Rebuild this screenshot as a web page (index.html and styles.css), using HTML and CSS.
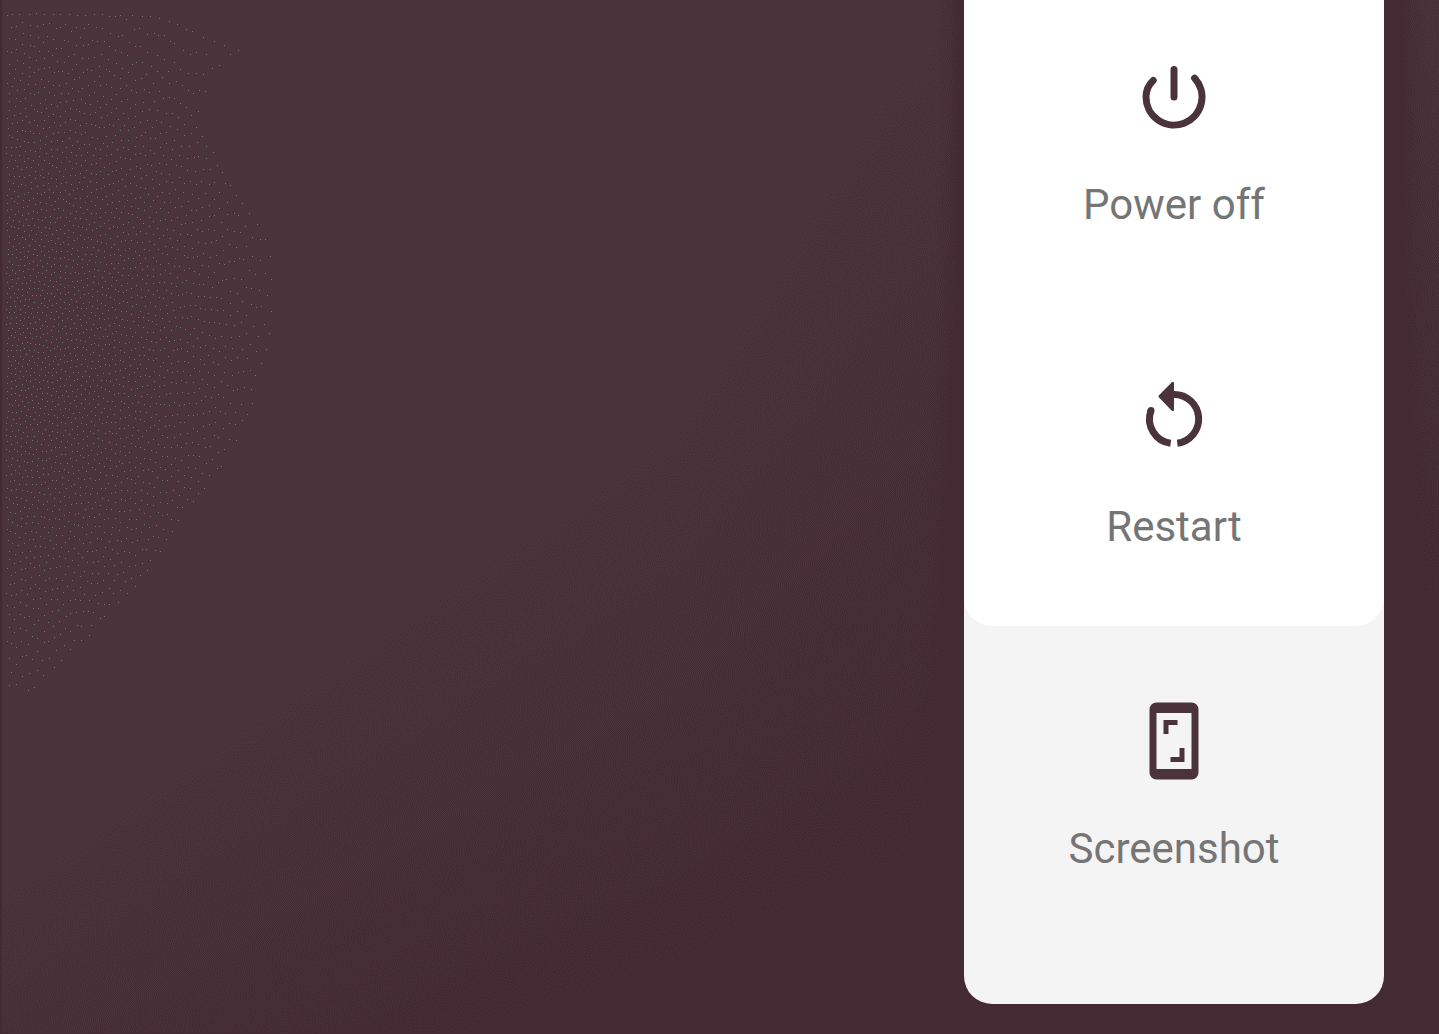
FILE: index.html
```html
<!DOCTYPE html>
<html lang="en">
<head>
  <meta charset="utf-8">
  <meta name="viewport" content="width=device-width, initial-scale=1">
  <title>Power menu</title>
  <link rel="stylesheet" href="styles.css">
</head>
<body>
  <canvas class="wallpaper" aria-hidden="true"></canvas>
  <main class="screen">
    <div class="panel">
      <div class="group">
        <button class="action" type="button">
          <svg class="icon" viewBox="0 0 84 84" aria-hidden="true">
            <path class="stroke" d="M21.2 25.5C16.6 29.8 14 35.5 14 42A28 28 0 1 0 62.6 23.1M42 14.5V42"/>
          </svg>
          <span class="label">Power off</span>
        </button>
        <button class="action" type="button">
          <svg class="icon" viewBox="0 0 84 84" aria-hidden="true">
            <path class="stroke flat" d="M41 17.5H42A24.5 24.5 0 0 1 45.3 66.3M19 33.5A24.5 24.5 0 0 0 38.7 66.3"/>
            <circle cx="19" cy="33.5" r="3.5"/>
            <path d="M39.6 5.6L27 18.2Q26 19.3 27 20.4L39.6 33.4Q42 35.4 42 32.4V6.6Q42 3.6 39.6 5.6Z"/>
          </svg>
          <span class="label">Restart</span>
        </button>
      </div>
      <button class="action" type="button">
        <svg class="icon" viewBox="0 0 84 84" aria-hidden="true">
          <path fill-rule="evenodd" d="M24.5 3.5H59.5A7 7 0 0 1 66.5 10.5V73.5A7 7 0 0 1 59.5 80.5H24.5A7 7 0 0 1 17.5 73.5V10.5A7 7 0 0 1 24.5 3.5ZM24.5 14V70H59.5V14Z"/>
          <path d="M31.5 21H45.5V26H36.5V35H31.5ZM52.5 63H38.5V58H47.5V49H52.5Z"/>
        </svg>
        <span class="label">Screenshot</span>
      </button>
    </div>
  </main>
  <script src="wallpaper.js"></script>
</body>
</html>
```
FILE: styles.css
```css
* {
  box-sizing: border-box;
}

body {
  margin: 0;
  background: #4a333a;
  font-family: Roboto, "Liberation Sans", sans-serif;
}

.wallpaper {
  position: fixed;
  inset: 0;
  z-index: -1;
  width: 100%;
  height: 100%;
}

.screen {
  display: flex;
  justify-content: flex-end;
  padding: 0 55px 30px;
}

.panel {
  flex: 0 1 420px;
  padding-bottom: 56px;
  border-radius: 0 0 28px 28px;
  background: #f4f4f4;
}

.group {
  border-radius: 0 0 28px 28px;
  background: #fff;
}

.action {
  display: flex;
  flex-direction: column;
  align-items: center;
  gap: 42px;
  width: 100%;
  padding: 73px 16px 75px;
  border: 0;
  background: none;
  color: #757575;
  font: inherit;
  font-size: 42px;
  line-height: 48px;
  cursor: pointer;
}

.group .action:first-child {
  padding-top: 55px;
}

.icon {
  width: 84px;
  height: 84px;
  fill: #4a333a;
}

.stroke {
  fill: none;
  stroke: #4a333a;
  stroke-width: 7;
  stroke-linecap: round;
}

.flat {
  stroke-linecap: butt;
}
```
FILE: wallpaper.js
```js
// Paints the wallpaper: a three-colour gradient, dithered by error diffusion.
const BASE = [74, 51, 58];
const SHADE = [68, 42, 51];
const DOT = [112, 117, 115];

const canvas = document.querySelector('.wallpaper');
const panel = document.querySelector('.panel');

// Where the shade begins and where it is complete, as [x, y] points.
const START = [[0, 885], [240, 715], [480, 555], [680, 410], [900, 50], [1439, -150]];
const END = [[0, 1260], [240, 1160], [480, 1040], [680, 965], [880, 885], [930, 845], [1384, 620], [1439, 680]];

// Right-hand edge of the speckled area, as [y, x] points.
const SPECKLE = [[11, 164], [50, 254], [75, 216], [120, 198], [180, 232], [240, 272], [330, 276], [400, 256], [460, 226], [520, 182], [600, 128], [640, 86], [694, 28]];

// Distance from the panel's right side to the end of the solid shade, as [y, distance] points.
const RIGHT_EDGE = [[0, 16], [400, 22], [580, 36], [650, 46]];

function at(points, x) {
  let i = 1;
  while (i < points.length - 1 && points[i][0] < x) i++;
  const [x0, y0] = points[i - 1];
  const [x1, y1] = points[i];
  return y0 + (y1 - y0) * (x - x0) / (x1 - x0);
}

function clamp(v) {
  return Math.max(0, Math.min(1, v));
}

// Repeatable pseudo-random value between 0 and 1 for a pixel.
function noise(x, y) {
  const s = Math.sin(x * 12.9898 + y * 78.233) * 43758.5453;
  return s - Math.floor(s);
}

function diffuse(w, h, threshold, jitter, field, paint) {
  let row = new Float32Array(w + 2);
  for (let y = 0; y < h; y++) {
    const next = new Float32Array(w + 2);
    const step = y % 2 ? -1 : 1;
    for (let n = 0; n < w; n++) {
      const x = step > 0 ? n : w - 1 - n;
      const f = field(x, y);
      if (f <= 0) continue;
      const v = f + row[x + 1];
      const on = v > threshold + jitter * noise(x, y);
      const err = on ? v - 1 : v;
      if (on) paint(x, y);
      row[x + 1 + step] += err * 7 / 16;
      next[x + 1 - step] += err * 3 / 16;
      next[x + 1] += err * 5 / 16;
      next[x + 1 + step] += err / 16;
    }
    row = next;
  }
}

function draw() {
  const w = canvas.width = window.innerWidth;
  const h = canvas.height = window.innerHeight;
  const box = panel.getBoundingClientRect();
  const ctx = canvas.getContext('2d');
  const image = ctx.createImageData(w, h);
  const put = (x, y, c) => image.data.set([c[0], c[1], c[2], 255], (y * w + x) * 4);

  for (let y = 0; y < h; y++) {
    for (let x = 0; x < w; x++) put(x, y, BASE);
  }

  const starts = [];
  const ends = [];
  for (let x = 0; x < w; x++) {
    starts.push(at(START, x * 1439 / w));
    ends.push(at(END, x * 1439 / w));
  }

  diffuse(w, h, 0.5, 0, (x, y) => {
    if (x < 2 || y > h - 2) return 1;
    if (x >= box.left && x < box.right) return 1;
    const py = y * 1034 / h;
    const slope = clamp((py - starts[x]) / (ends[x] - starts[x]));
    if (x < box.left) {
      const solid = 6 + Math.max(0, py - 250) / 22;
      const near = clamp((30 + solid - box.left + x) / 30);
      return clamp(slope + (1 - slope) * near ** 2);
    }
    const near = clamp((box.right + at(RIGHT_EDGE, py) + 32 - x) / 32);
    return clamp(slope + (1 - slope) * near ** 2);
  }, (x, y) => put(x, y, SHADE));

  diffuse(w, h, 0.06, 0.12, (x, y) => {
    if (x < 6 || y < 11 || y > 694) return 0;
    const edge = at(SPECKLE, y);
    if (x > edge) return 0;
    const r = Math.hypot(x / 285, (y - 330) / 400);
    return 0.005 + 0.033 * clamp(1 - r);
  }, (x, y) => put(x, y, DOT));

  ctx.putImageData(image, 0, 0);
}

draw();
window.addEventListener('resize', draw);
```
